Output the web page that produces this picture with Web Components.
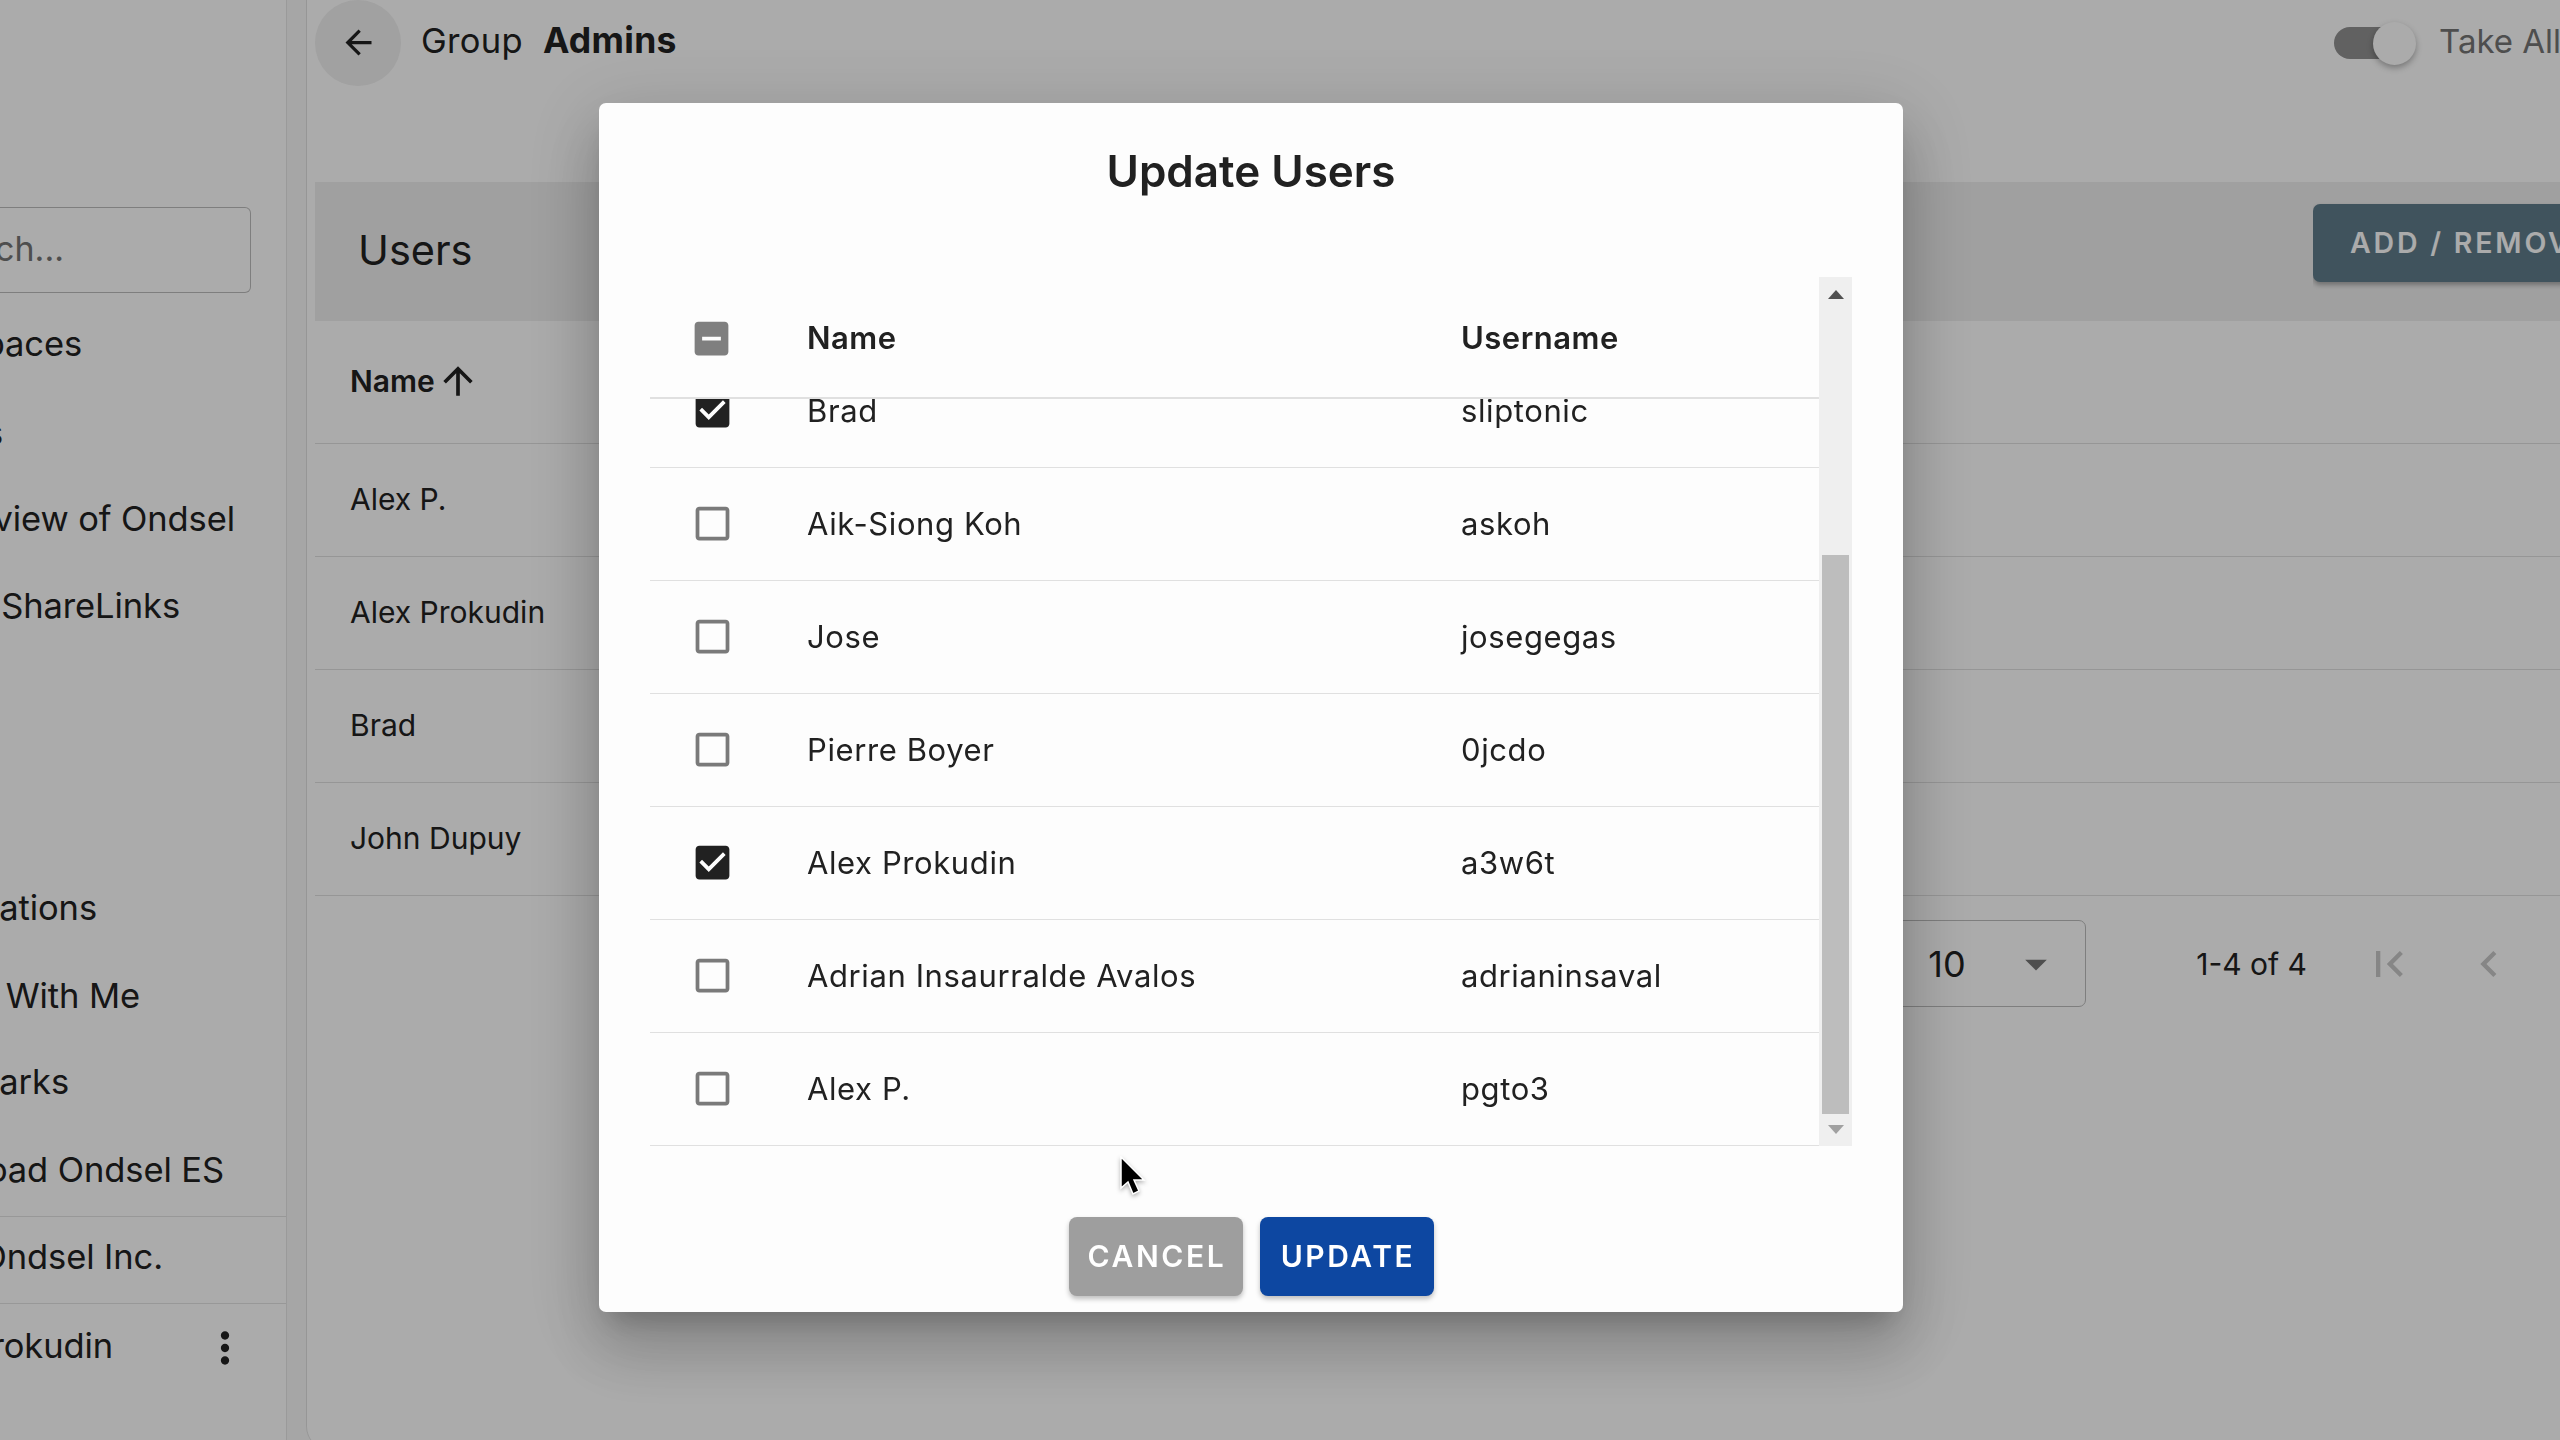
<!DOCTYPE html>
<html>
<head>
<meta charset="utf-8">
<title>Update Users</title>
<style>
  html, body { margin: 0; height: 100%; overflow: hidden; }
  body { font-family: Inter, "Liberation Sans", sans-serif; color: #212121; background: #f8f8f8; }
</style>
</head>
<body>
<app-shell>
  <side-bar slot="side">
    <search-box></search-box>
    <nav-item top="31" end="82">Workspaces</nav-item>
    <nav-item top="49" end="3">Tutorials</nav-item>
    <nav-item top="46" end="235">Overview of Ondsel</nav-item>
    <nav-item top="47" end="180">ShareLinks</nav-item>
    <nav-item top="262" end="97">Notifications</nav-item>
    <nav-item top="48" end="140">Shared With Me</nav-item>
    <nav-item top="46" end="69">Bookmarks</nav-item>
    <nav-item top="48" end="224">Download Ondsel ES</nav-item>
    <nav-item top="26" pad="19.5" rule end="163">Ondsel Inc.</nav-item>
    <nav-item top="26" pad="22.5" rule end="113" more>Alex Prokudin</nav-item>
  </side-bar>
  <group-page slot="main">
    <users-panel>
      <bg-row>Alex P.</bg-row>
      <bg-row>Alex Prokudin</bg-row>
      <bg-row>Brad</bg-row>
      <bg-row>John Dupuy</bg-row>
    </users-panel>
    <table-pager></table-pager>
  </group-page>
</app-shell>

<update-dialog>
  <user-row state="on" name="Brad" login="sliptonic"></user-row>
  <user-row name="Aik-Siong Koh" login="askoh"></user-row>
  <user-row name="Jose" login="josegegas"></user-row>
  <user-row name="Pierre Boyer" login="0jcdo"></user-row>
  <user-row state="on" name="Alex Prokudin" login="a3w6t"></user-row>
  <user-row name="Adrian Insaurralde Avalos" login="adrianinsaval"></user-row>
  <user-row name="Alex P." login="pgto3"></user-row>
</update-dialog>

<script>
// iconos material, todos en caja de 24
const ICONS = {
  back: 'M20 11H7.83l5.59-5.59L12 4l-8 8 8 8 1.41-1.41L7.83 13H20v-2z',
  up: 'M4 12l1.41 1.41L11 7.83V20h2V7.83l5.58 5.59L20 12l-8-8-8 8z',
  first: 'M18.41 16.59L13.82 12l4.59-4.59L17 6l-6 6 6 6zM6 6h2v12H6z',
  prev: 'M15.41 7.41L14 6l-6 6 6 6 1.41-1.41L10.83 12z',
  drop: 'M7 10l5 5 5-5z',
  more: 'M12 8c1.1 0 2-.9 2-2s-.9-2-2-2-2 .9-2 2 .9 2 2 2zm0 2c-1.1 0-2 .9-2 2s.9 2 2 2 2-.9 2-2-.9-2-2-2zm0 6c-1.1 0-2 .9-2 2s.9 2 2 2 2-.9 2-2-.9-2-2-2z',
  off: 'M19 5v14H5V5h14m0-2H5c-1.1 0-2 .9-2 2v14c0 1.1.9 2 2 2h14c1.1 0 2-.9 2-2V5c0-1.1-.9-2-2-2z',
  on: 'M19 3H5c-1.11 0-2 .9-2 2v14c0 1.1.89 2 2 2h14c1.11 0 2-.9 2-2V5c0-1.1-.89-2-2-2zm-9 14l-5-5 1.41-1.41L10 14.17l7.59-7.59L19 8l-9 9z',
  some: 'M19 3H5c-1.1 0-2 .9-2 2v14c0 1.1.9 2 2 2h14c1.1 0 2-.9 2-2V5c0-1.1-.9-2-2-2zm-2 10H7v-2h10v2z'
}
const icon = (name, size, color) =>
  `<svg width="${size}" height="${size}" viewBox="0 0 24 24" style="display:block;flex:none"><path fill="${color}" d="${ICONS[name]}"/></svg>`

class Base extends HTMLElement{
  constructor(){
    super()
    this.attachShadow({mode: 'open'})
  }
  connectedCallback(){
    this.shadowRoot.innerHTML = `<style>${this.styles()}</style>${this.markup()}`
  }
  styles(){ return '' }
  markup(){ return '<slot></slot>' }
}

class AppShell extends Base{
  styles(){ return `
    :host{display:grid; grid-template-columns:287px 1fr; height:1440px; overflow:hidden}
  `}
  markup(){ return `<slot name="side"></slot><slot name="main"></slot>` }
}

class SideBar extends Base{
  styles(){ return `
    :host{display:block; height:1440px; background:#fff; border-right:1px solid #e6e6e6; box-sizing:border-box; overflow:hidden; padding-top:207px}
  `}
}

class SearchBox extends Base{
  styles(){ return `
    :host{display:flex; align-items:center; width:251px; height:86px; box-sizing:border-box; border:1.5px solid #bdbdbd; border-left:0; border-radius:0 6px 6px 0; overflow:hidden; font-size:34px; color:#757575; justify-content:flex-end; padding-right:186px; padding-bottom:3px; white-space:nowrap}
  `}
  markup(){ return `<span style="flex:none">Search...</span>` }
}

class NavItem extends Base{
  styles(){ return `
    :host{display:flex; justify-content:flex-end; white-space:nowrap; font-size:34.5px; letter-spacing:-.1px; line-height:40px; position:relative; margin-top:${this.getAttribute('top')}px; padding-right:${286 - this.getAttribute('end')}px}
    :host([rule]){border-top:1.5px solid #e3e3e3; padding-top:${this.getAttribute('pad')}px}
    .t{flex:none}
    .more{position:absolute; left:200px; top:19px}
  `}
  markup(){
    const more = this.hasAttribute('more') ? `<span class="more">${icon('more', 50, '#212121')}</span>` : ''
    return `<span class="t"><slot></slot></span>${more}`
  }
}

class GroupPage extends Base{
  styles(){ return `
    :host{display:block; background:#fff; margin-left:19px; height:1450px; border-left:1.5px solid #e0e0e0; border-bottom-left-radius:24px; padding-left:8px; overflow:hidden}
    .top{display:flex; align-items:center; height:86px; margin-bottom:96px}
    .back{width:86px; height:86px; border-radius:50%; background:#f0f0f0; display:flex; align-items:center; justify-content:center; margin-right:20px}
    .back svg{margin-top:-2px}
    .title{flex:1; font-size:34.5px; letter-spacing:.3px; padding-bottom:5px}
    b{font-weight:700; margin-left:10px; font-size:35.5px}
    .right{flex:0 0 226px; display:flex; align-items:center; white-space:nowrap; overflow:hidden; height:86px}
    .track{width:64px; height:32px; border-radius:16px; background:#919191; position:relative; margin-right:41px; flex:none}
    .thumb{position:absolute; left:39px; top:-5.5px; width:43px; height:43px; border-radius:50%; background:#fff; box-shadow:0 3px 6px rgba(0,0,0,.3)}
    .lbl{font-size:33px; color:#757575; padding-bottom:5px}
  `}
  markup(){ return `
    <div class="top">
      <div class="back">${icon('back', 39, '#212121')}</div>
      <div class="title">Group <b>Admins</b></div>
      <div class="right"><div class="track"><div class="thumb"></div></div><span class="lbl">Take All</span></div>
    </div>
    <slot></slot>
  `}
}

class UsersPanel extends Base{
  styles(){ return `
    :host{display:block}
    .head{display:flex; align-items:center; height:139px; background:#efefef; padding-left:43px}
    h2{flex:1; margin:0 0 3px; font-size:41.5px; font-weight:400}
    .slot{flex:0 0 247px; overflow:hidden; height:139px; padding-top:22px; box-sizing:border-box}
    .add{width:420px; height:78px; background:#607d8b; color:#fff; border-radius:7px; font-size:28.5px; font-weight:600; letter-spacing:2.8px; line-height:78px; padding-left:37px; box-sizing:border-box; white-space:nowrap; box-shadow:0 3px 5px rgba(0,0,0,.3)}
    .hrow{display:flex; align-items:center; gap:1px; height:123px; padding-left:35px; padding-bottom:3px; font-size:30px; font-weight:600; border-bottom:1.5px solid #e0e0e0; box-sizing:border-box}
  `}
  markup(){ return `
    <div class="head"><h2>Users</h2><div class="slot"><div class="add">ADD / REMOVE USERS</div></div></div>
    <div class="hrow">Name ${icon('up', 44, '#212121')}</div>
    <slot></slot>
  `}
}

class BgRow extends Base{
  styles(){ return `
    :host{display:block; height:113px; line-height:110px; padding-left:35px; font-size:30px; border-bottom:1.5px solid #e0e0e0; box-sizing:border-box}
  `}
}

class TablePager extends Base{
  styles(){ return `
    :host{display:flex; align-items:center; justify-content:flex-end; height:87px; margin-top:24px; padding-right:45px; font-size:30px}
    .sel{width:220px; height:87px; box-sizing:border-box; border:1.5px solid #bdbdbd; border-radius:7px; display:flex; align-items:center; padding-left:61px; margin-right:110px; position:relative; font-size:36px}
    .sel span{position:absolute; left:143px; top:17px}
    .count{margin-right:52px; white-space:nowrap}
    .i{margin-left:4px}
    .i2{margin-left:48px}
  `}
  markup(){ return `
    <div class="sel">10<span>${icon('drop', 52, '#757575')}</span></div>
    <div class="count">1-4 of 4</div>
    <div class="i">${icon('first', 52, '#c8c8c8')}</div>
    <div class="i2">${icon('prev', 52, '#c8c8c8')}</div>
  `}
}

class TickBox extends Base{
  styles(){ return `:host{display:block; width:45px; height:45px}` }
  markup(){
    const s = this.getAttribute('state') || 'off'
    const c = {off: '#7a7a7a', on: '#212121', some: '#7f7f7f'}[s]
    return icon(s, 45, c)
  }
}

class UserRow extends Base{
  styles(){ return `
    :host{display:grid; grid-template-columns:157px 654px 1fr; align-items:center; height:113px; box-sizing:border-box; border-bottom:1.5px solid #e0e0e0; padding-bottom:2px; font-size:31px; letter-spacing:.6px; white-space:nowrap}
    tick-box{margin-left:40px}
  `}
  markup(){ return `
    <tick-box state="${this.getAttribute('state') || 'off'}"></tick-box>
    <div>${this.getAttribute('name')}</div>
    <div>${this.getAttribute('login')}</div>
  `}
}

class DialogBtn extends Base{
  styles(){ return `
    :host{display:block; height:79px; width:174px; line-height:78px; text-align:center; text-indent:3px; border-radius:8px; color:#fff; font-size:30px; font-weight:600; letter-spacing:2.6px; background:#9e9e9e; box-shadow:0 3px 5px rgba(0,0,0,.25)}
    :host([blue]){background:#0d47a1}
  `}
}

class UpdateDialog extends Base{
  styles(){ return `
    :host{position:fixed; inset:0; background:rgba(0,0,0,.33); display:block}
    .box{position:absolute; left:599px; top:103px; width:1304px; height:1209px; box-sizing:border-box; background:#fdfdfd; border-radius:7px; padding:0 51px;
      box-shadow:0 18px 25px -11px rgba(0,0,0,.2), 0 39px 62px 5px rgba(0,0,0,.14), 0 15px 75px 13px rgba(0,0,0,.12)}
    h1{margin:0; height:174px; line-height:136px; text-align:center; font-size:44px; font-weight:600; color:#212121}
    .view{display:grid; grid-template-columns:1169px 33px; height:869px}
    .head{display:grid; grid-template-columns:157px 654px 1fr; align-items:center; height:122px; box-sizing:border-box; border-bottom:2.5px solid #e0e0e0; font-size:31px; font-weight:600; letter-spacing:.5px}
    .head tick-box{margin:2px 0 0 39px}
    .body{height:747px; overflow:hidden}
    .rows{margin-top:-44px}
    .bar{background:#efefef; position:relative; display:flex; flex-direction:column; align-items:center; justify-content:space-between; padding:13px 0 12px; box-sizing:border-box}
    .thumb{position:absolute; left:3px; right:3px; top:278px; height:559px; background:#bdbdbd}
    .tri{width:0; height:0; border-left:8px solid transparent; border-right:8px solid transparent}
    .tri.u{border-bottom:9px solid #505050}
    .tri.d{border-top:9px solid #a0a0a0}
    .foot{display:flex; justify-content:center; gap:17px; margin-top:71px}
    .cursor{position:absolute; left:521px; top:1053px; filter:drop-shadow(0 2px 2px rgba(0,0,0,.3))}
  `}
  markup(){ return `
    <div class="box">
      <h1>Update Users</h1>
      <div class="view">
        <div>
          <div class="head"><tick-box state="some"></tick-box><div>Name</div><div>Username</div></div>
          <div class="body"><div class="rows"><slot></slot></div></div>
        </div>
        <div class="bar"><div class="tri u"></div><div class="thumb"></div><div class="tri d"></div></div>
      </div>
      <div class="foot"><dialog-btn>CANCEL</dialog-btn><dialog-btn blue>UPDATE</dialog-btn></div>
      <svg class="cursor" width="30" height="42" viewBox="0 0 30 42"><path d="M1 1v31l7-6 5 12 6-3-5-11h10z" fill="#000" stroke="#fff" stroke-width="1.5"/></svg>
    </div>
  `}
}

customElements.define('app-shell', AppShell)
customElements.define('side-bar', SideBar)
customElements.define('search-box', SearchBox)
customElements.define('nav-item', NavItem)
customElements.define('group-page', GroupPage)
customElements.define('users-panel', UsersPanel)
customElements.define('bg-row', BgRow)
customElements.define('table-pager', TablePager)
customElements.define('tick-box', TickBox)
customElements.define('user-row', UserRow)
customElements.define('dialog-btn', DialogBtn)
customElements.define('update-dialog', UpdateDialog)
</script>
</body>
</html>
